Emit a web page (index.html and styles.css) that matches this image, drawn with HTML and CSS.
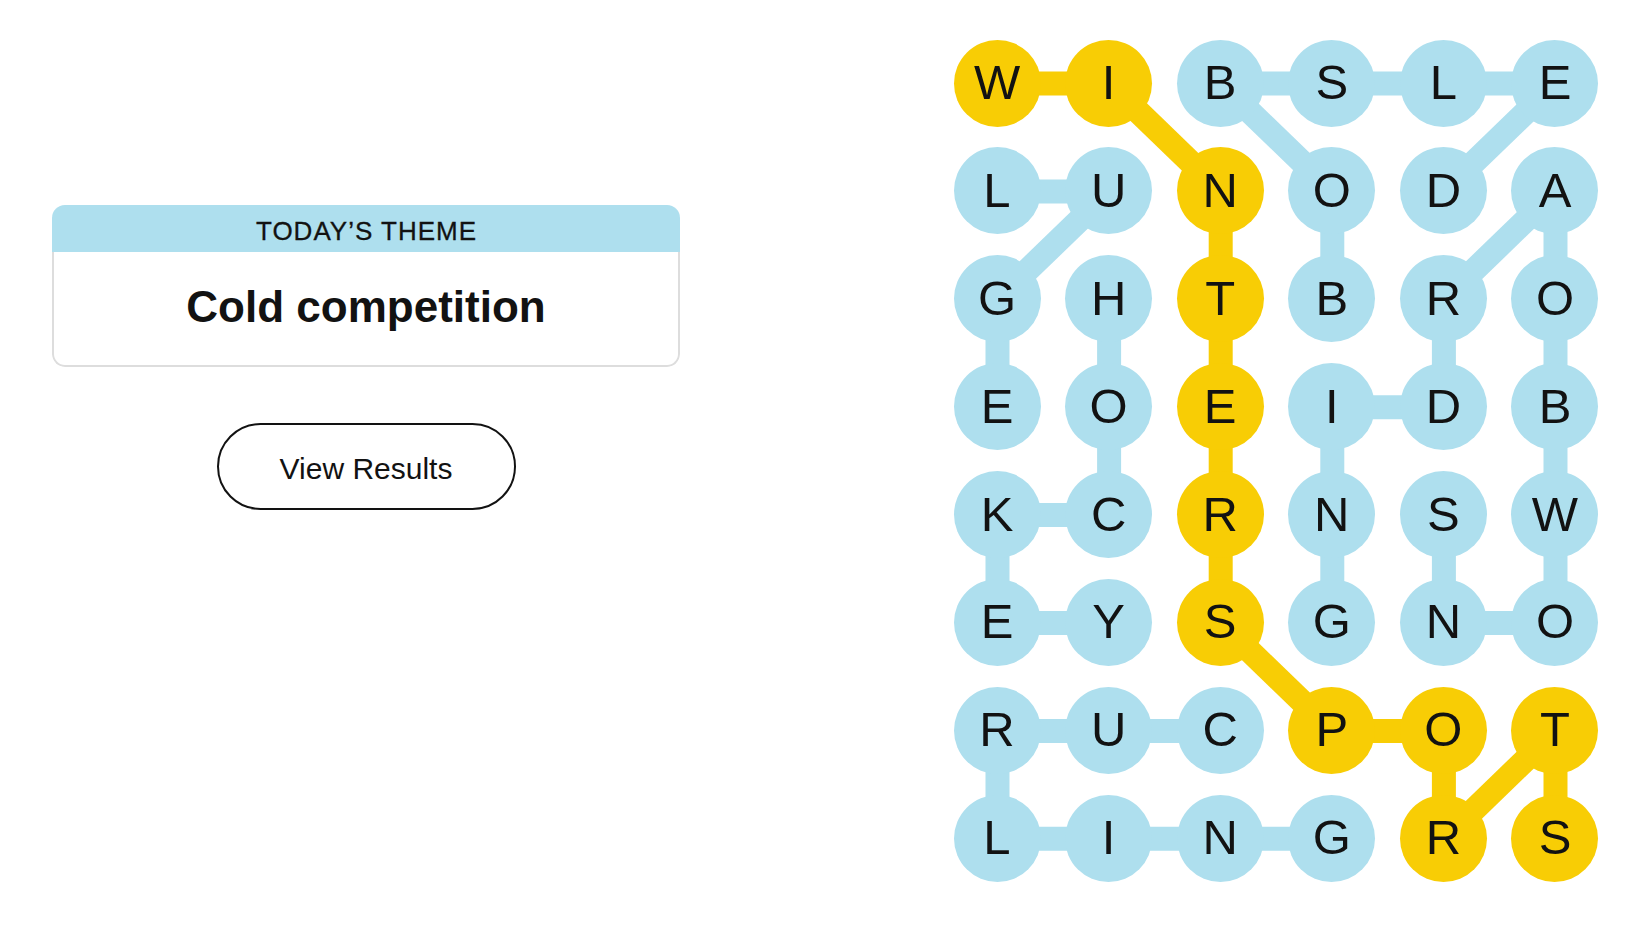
FILE: index.html
```html
<!DOCTYPE html>
<html lang="en">
<head>
<meta charset="utf-8">
<title>Strands</title>
<link rel="stylesheet" href="styles.css">
</head>
<body>
<main class="page">
  <section class="side">
    <div class="theme-card">
      <h2 class="theme-label">TODAY’S THEME</h2>
      <p class="theme-text">Cold competition</p>
    </div>
    <button class="results-btn" type="button">View Results</button>
  </section>

  <section class="board">
    <svg class="links" viewBox="0 0 645 842.3" width="645" height="842.3" aria-hidden="true">
      <g class="link-blue">
        <line x1="378.3" y1="259.3" x2="378.3" y2="151.4"/>
        <line x1="378.3" y1="151.4" x2="266.7" y2="43.5"/>
        <line x1="266.7" y1="43.5" x2="601.5" y2="43.5"/>
        <line x1="601.5" y1="43.5" x2="489.9" y2="151.4"/>
        <line x1="43.5" y1="151.4" x2="155.1" y2="151.4"/>
        <line x1="155.1" y1="151.4" x2="43.5" y2="259.3"/>
        <line x1="43.5" y1="259.3" x2="43.5" y2="367.2"/>
        <line x1="155.1" y1="259.3" x2="155.1" y2="475.1"/>
        <line x1="155.1" y1="475.1" x2="43.5" y2="475.1"/>
        <line x1="43.5" y1="475.1" x2="43.5" y2="583"/>
        <line x1="43.5" y1="583" x2="155.1" y2="583"/>
        <line x1="489.9" y1="475.1" x2="489.9" y2="583"/>
        <line x1="489.9" y1="583" x2="601.5" y2="583"/>
        <line x1="601.5" y1="583" x2="601.5" y2="151.4"/>
        <line x1="601.5" y1="151.4" x2="489.9" y2="259.3"/>
        <line x1="489.9" y1="259.3" x2="489.9" y2="367.2"/>
        <line x1="489.9" y1="367.2" x2="378.3" y2="367.2"/>
        <line x1="378.3" y1="367.2" x2="378.3" y2="583"/>
        <line x1="266.7" y1="690.9" x2="43.5" y2="690.9"/>
        <line x1="43.5" y1="690.9" x2="43.5" y2="798.8"/>
        <line x1="43.5" y1="798.8" x2="378.3" y2="798.8"/>
      </g>
      <g class="link-yellow">
        <line x1="43.5" y1="43.5" x2="155.1" y2="43.5"/>
        <line x1="155.1" y1="43.5" x2="266.7" y2="151.4"/>
        <line x1="266.7" y1="151.4" x2="266.7" y2="583"/>
        <line x1="266.7" y1="583" x2="378.3" y2="690.9"/>
        <line x1="378.3" y1="690.9" x2="489.9" y2="690.9"/>
        <line x1="489.9" y1="690.9" x2="489.9" y2="798.8"/>
        <line x1="489.9" y1="798.8" x2="601.5" y2="690.9"/>
        <line x1="601.5" y1="690.9" x2="601.5" y2="798.8"/>
      </g>
    </svg>

    <div class="grid">
      <div class="cell gold">W</div><div class="cell gold">I</div><div class="cell">B</div><div class="cell">S</div><div class="cell">L</div><div class="cell">E</div>
      <div class="cell">L</div><div class="cell">U</div><div class="cell gold">N</div><div class="cell">O</div><div class="cell">D</div><div class="cell">A</div>
      <div class="cell">G</div><div class="cell">H</div><div class="cell gold">T</div><div class="cell">B</div><div class="cell">R</div><div class="cell">O</div>
      <div class="cell">E</div><div class="cell">O</div><div class="cell gold">E</div><div class="cell">I</div><div class="cell">D</div><div class="cell">B</div>
      <div class="cell">K</div><div class="cell">C</div><div class="cell gold">R</div><div class="cell">N</div><div class="cell">S</div><div class="cell">W</div>
      <div class="cell">E</div><div class="cell">Y</div><div class="cell gold">S</div><div class="cell">G</div><div class="cell">N</div><div class="cell">O</div>
      <div class="cell">R</div><div class="cell">U</div><div class="cell">C</div><div class="cell gold">P</div><div class="cell gold">O</div><div class="cell gold">T</div>
      <div class="cell">L</div><div class="cell">I</div><div class="cell">N</div><div class="cell">G</div><div class="cell gold">R</div><div class="cell gold">S</div>
    </div>
  </section>
</main>
</body>
</html>
```

FILE: styles.css
```css
* {
  box-sizing: border-box;
}

html, body {
  margin: 0;
  padding: 0;
  background: #ffffff;
}

body {
  font-family: "Liberation Sans", Arial, sans-serif;
  color: #121212;
}

.page {
  display: flex;
  align-items: flex-start;
  padding: 39.5px 0 0 52px;
}

.side {
  width: 628px;
  margin-top: 165.5px;
  display: flex;
  flex-direction: column;
  align-items: center;
}

.theme-card {
  width: 628px;
  border-radius: 13px;
  overflow: hidden;
}

.theme-label {
  margin: 0;
  height: 47px;
  line-height: 47px;
  padding-top: 3px;
  padding-left: 1px;
  background: #aedfee;
  text-align: center;
  font-size: 26px;
  font-weight: 400;
  letter-spacing: 1px;
  color: #121212;
  -webkit-text-stroke: 0.3px #121212;
}

.theme-text {
  margin: 0;
  height: 115px;
  display: flex;
  align-items: center;
  justify-content: center;
  border: 2px solid #dddddd;
  border-top: none;
  border-radius: 0 0 13px 13px;
  font-size: 44px;
  font-weight: 700;
  color: #121212;
  padding-bottom: 4px;
}

.results-btn {
  margin-top: 56px;
  width: 299px;
  height: 87px;
  border: 2px solid #121212;
  border-radius: 44px;
  background: #ffffff;
  font-family: "Liberation Sans", Arial, sans-serif;
  font-size: 30px;
  color: #121212;
  padding: 4px 0 0;
  cursor: pointer;
}

.board {
  position: relative;
  margin-left: 273.5px;
  width: 645px;
  height: 842.3px;
}

.links {
  position: absolute;
  left: 0;
  top: 0;
}

.links line {
  stroke-width: 24;
  stroke-linecap: butt;
}

.link-blue line {
  stroke: #aedfee;
}

.link-yellow line {
  stroke: #f8cd05;
}

.grid {
  position: relative;
  display: grid;
  grid-template-columns: repeat(6, 87px);
  grid-auto-rows: 87px;
  column-gap: 24.6px;
  row-gap: 20.9px;
}

.cell {
  width: 87px;
  height: 87px;
  border-radius: 50%;
  background: #aedfee;
  display: flex;
  align-items: center;
  justify-content: center;
  font-size: 49px;
  color: #121212;
  padding-bottom: 2px;
}

.cell.gold {
  background: #f8cd05;
}
```
